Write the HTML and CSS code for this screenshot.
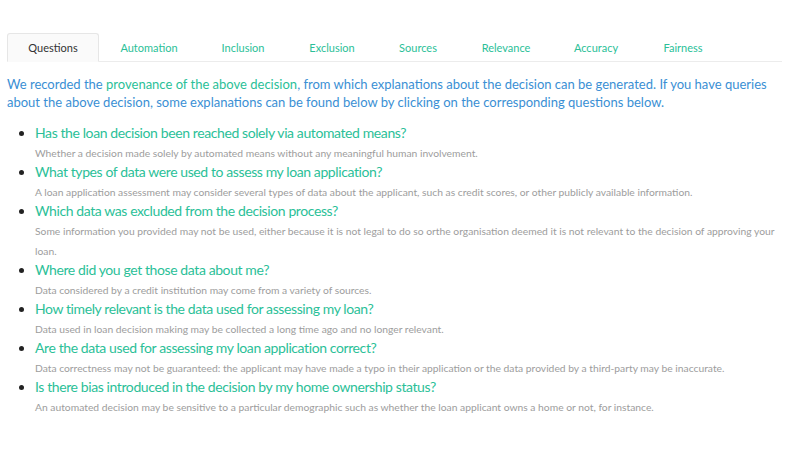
FILE: index.html
```html
<!DOCTYPE html>
<html lang="en">
<head>
  <meta charset="UTF-8" />
  <title>Loan Decision Provenance</title>
  <link rel="stylesheet" href="styles.css">
</head>
<body>
  <div class="container">
    <ul class="tabs">
      <li class="tab active">Questions</li>
      <li class="tab">Automation</li>
      <li class="tab">Inclusion</li>
      <li class="tab">Exclusion</li>
      <li class="tab">Sources</li>
      <li class="tab">Relevance</li>
      <li class="tab">Accuracy</li>
      <li class="tab">Fairness</li>
    </ul>

    <p class="intro">We recorded the <span class="hl">provenance of the above decision</span>, from which explanations about the decision can be generated. If you have queries about the above decision, some explanations can be found below by clicking on the corresponding questions below.</p>

    <ul class="questions">
      <li>
        <div class="q">Has the loan decision been reached solely via automated means?</div>
        <div class="a">Whether a decision made solely by automated means without any meaningful human involvement.</div>
      </li>
      <li>
        <div class="q">What types of data were used to assess my loan application?</div>
        <div class="a">A loan application assessment may consider several types of data about the applicant, such as credit scores, or other publicly available information.</div>
      </li>
      <li>
        <div class="q">Which data was excluded from the decision process?</div>
        <div class="a">Some information you provided may not be used, either because it is not legal to do so orthe organisation deemed it is not relevant to the decision of approving your loan.</div>
      </li>
      <li>
        <div class="q">Where did you get those data about me?</div>
        <div class="a">Data considered by a credit institution may come from a variety of sources.</div>
      </li>
      <li>
        <div class="q">How timely relevant is the data used for assessing my loan?</div>
        <div class="a">Data used in loan decision making may be collected a long time ago and no longer relevant.</div>
      </li>
      <li>
        <div class="q">Are the data used for assessing my loan application correct?</div>
        <div class="a">Data correctness may not be guaranteed: the applicant may have made a typo in their application or the data provided by a third-party may be inaccurate.</div>
      </li>
      <li>
        <div class="q">Is there bias introduced in the decision by my home ownership status?</div>
        <div class="a">An automated decision may be sensitive to a particular demographic such as whether the loan applicant owns a home or not, for instance.</div>
      </li>
    </ul>
  </div>
</body>
</html>
```

FILE: styles.css
```css
body {
  font-family: Lato, 'Open Sans', sans-serif;
  background: #ffffff;
  margin: 0;
  padding: 33px 18px 0 7px;
}
.container {
  width: 775px;
}
.tabs {
  list-style: none;
  margin: 0;
  padding: 0;
  display: flex;
  border-bottom: 1px solid #ececec;
}
.tab {
  font-size: 11px;
  color: #2bbf98;
  height: 27px;
  line-height: 27px;
  text-align: center;
  width: 86px;
  border: 1px solid transparent;
  border-bottom: none;
  margin-bottom: -1px;
}
.tab:nth-child(2) { width: 98px; }
.tab:nth-child(3) { width: 86px; }
.tab:nth-child(4) { width: 88px; }
.tab:nth-child(5) { width: 80px; }
.tab:nth-child(6) { width: 92px; }
.tab:nth-child(7) { width: 84px; }
.tab:nth-child(8) { width: 86px; }
.tab.active {
  width: 90px;
  color: #333;
  background: #fafafa;
  border-color: #e6e6e6;
  border-bottom: 1px solid #fafafa;
  border-radius: 3px 3px 0 0;
}
.intro {
  margin: 13px 0 12px;
  font-size: 13px;
  line-height: 18px;
  color: #3a8fd4;
}
.hl {
  color: #2bbf98;
}
.questions {
  margin: 0;
  padding-left: 28px;
}
.questions li {
  font-size: 14px;
  color: #222;
}
.q {
  font-size: 14px;
  letter-spacing: -0.4px;
  line-height: 20px;
  color: #2bbf98;
}
.a {
  font-size: 10.3px;
  line-height: 20px;
  color: #9d9d9d;
  margin-bottom: -1px;
}
```
